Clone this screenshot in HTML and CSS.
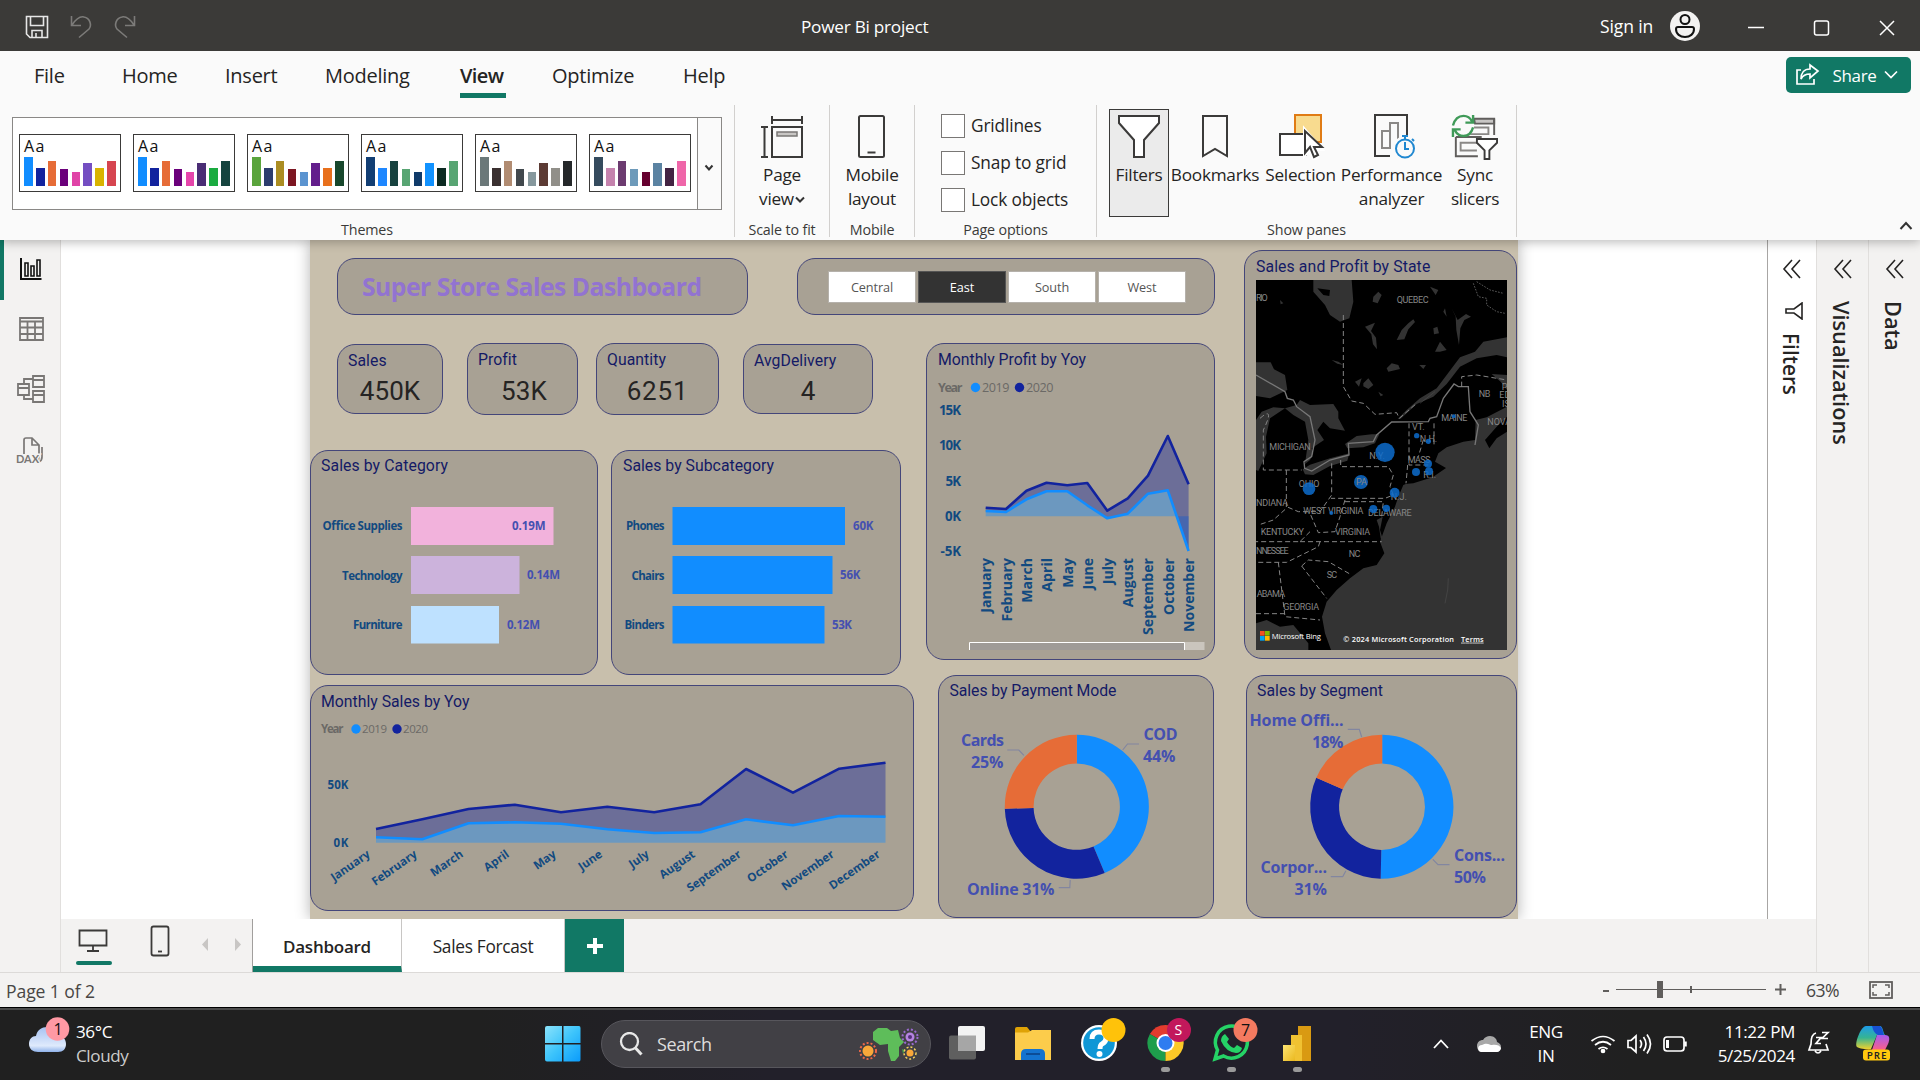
FILE: index.html
```html
<!DOCTYPE html>
<html lang="en">
<head>
<meta charset="utf-8">
<title>Power Bi project</title>
<link rel="stylesheet" href="styles.css">
</head>
<body>
<header class="titlebar">
  <svg class="quick" width="136" height="51" viewBox="0 0 136 51" fill="none">
    <g stroke="#e6e6e6" stroke-width="1.6"><path d="M26.5 16.5h21v21H30l-3.500-3.500z"/><path d="M30.500 17v8.500h13V17M32 37.500v-7h10v7M36 37v-4"/></g>
    <g stroke="#7c7b79" stroke-width="1.600"><path d="M71.500 16v9.500h9.500M72 25c4-6 8-9 12-8 6 1 8 8 5 12l-10 8.500"/><path d="M134.500 16v9.500H125M134 25c-4-6-8-9-12-8-6 1-8 8-5 12l10 8.500"/></g>
  </svg>
  <div class="doc-title">Power Bi project</div>
  <div class="sign-in">Sign in</div>
  <svg class="avatar" width="30" height="30" viewBox="0 0 30 30"><circle cx="15" cy="15" r="15" fill="#f3f2f1"/><g fill="none" stroke="#111" stroke-width="2"><circle cx="15" cy="8.500" r="4.500"/><path d="M8 16h14c1 0 2 1 2 2 0 5-4 8-9 8s-9-3-9-8c0-1 1-2 2-2z"/></g></svg>
  <svg class="winctl" width="150" height="18" viewBox="0 0 150 18" fill="none" stroke="#fff" stroke-width="1.500"><path d="M1 8.500h16"/><rect x="67.500" y="2" width="14" height="14" rx="2"/><path d="M133 2l14 14M147 2l-14 14"/></svg>
</header>

<nav class="menu">
  <a class="m-file">File</a><a class="m-home">Home</a><a class="m-insert">Insert</a><a class="m-model">Modeling</a><a class="m-view on">View</a><a class="m-opt">Optimize</a><a class="m-help">Help</a>
  <button class="share">
    <svg width="26" height="24" viewBox="0 0 26 24" fill="none" stroke="#fff" stroke-width="1.700"><path d="M6 7H2v14h17v-5"/><path d="M15 2l8 6-8 7v-4c-4 0-7 1-9 5 0-6 3-10 9-10z"/></svg>
    <span>Share</span>
    <svg width="16" height="10" viewBox="0 0 16 10" fill="none" stroke="#fff" stroke-width="1.700"><path d="M2 1.500l6 6 6-6"/></svg>
  </button>
</nav>

<section class="ribbon">
  <div class="group g-themes">
    <div class="gallery">
      <div class="thumbs">
        <div class="thumb"><b>Aa</b><div class="bars"><i style="background:#118dff"></i><i style="background:#12239e"></i><i style="background:#e66c37"></i><i style="background:#6b007b"></i><i style="background:#e044a7"></i><i style="background:#744ec2"></i><i style="background:#d9b300"></i><i style="background:#d64550"></i></div></div>
        <div class="thumb"><b>Aa</b><div class="bars"><i style="background:#118dff"></i><i style="background:#12239e"></i><i style="background:#e66c37"></i><i style="background:#6b007b"></i><i style="background:#e645ab"></i><i style="background:#4a2d75"></i><i style="background:#1aab40"></i><i style="background:#15443f"></i></div></div>
        <div class="thumb"><b>Aa</b><div class="bars"><i style="background:#5aa43c"></i><i style="background:#2c3c6e"></i><i style="background:#ab8d22"></i><i style="background:#7c1621"></i><i style="background:#5b94d0"></i><i style="background:#631e8c"></i><i style="background:#e8701c"></i><i style="background:#18472c"></i></div></div>
        <div class="thumb"><b>Aa</b><div class="bars"><i style="background:#123e73"></i><i style="background:#1e87ff"></i><i style="background:#17423f"></i><i style="background:#58a573"></i><i style="background:#103b6a"></i><i style="background:#1192ff"></i><i style="background:#0c2a22"></i><i style="background:#58a573"></i></div></div>
        <div class="thumb"><b>Aa</b><div class="bars"><i style="background:#6b7879"></i><i style="background:#3a3030"></i><i style="background:#b18c72"></i><i style="background:#41484d"></i><i style="background:#86989d"></i><i style="background:#5c3b34"></i><i style="background:#918f89"></i><i style="background:#25282a"></i></div></div>
        <div class="thumb"><b>Aa</b><div class="bars"><i style="background:#354b5e"></i><i style="background:#c583ae"></i><i style="background:#6c3b70"></i><i style="background:#6d9aba"></i><i style="background:#66002f"></i><i style="background:#5b83a2"></i><i style="background:#432342"></i><i style="background:#ef66a9"></i></div></div>
      </div>
      <div class="more"><svg width="10" height="8" viewBox="0 0 10 8"><path d="M1.500 1.500l3.500 4 3.500-4" fill="none" stroke="#333" stroke-width="2"/></svg></div>
    </div>
    <div class="glabel">Themes</div>
  </div>
  <div class="group g-scale">
    <div class="tool">
      <svg width="44" height="44" viewBox="0 0 44 44" fill="none" stroke="#3b3a39" stroke-width="2"><path d="M12 1v8M42 1v8M12 5h30M1 12h7M1 42h7M4.500 12v30"/><rect x="12" y="12" width="30" height="30"/><rect x="17" y="17" width="20" height="4" fill="#c8c6c4" stroke="#797775" stroke-width="1.500"/></svg>
      <span>Page<br>view<svg class="mini" width="10" height="8" viewBox="0 0 10 8"><path d="M1 1.500l4 4 4-4" fill="none" stroke="#333" stroke-width="2"/></svg></span>
    </div>
    <div class="glabel">Scale to fit</div>
  </div>
  <div class="group g-mobile">
    <div class="tool">
      <svg width="44" height="44" viewBox="0 0 44 44" fill="none" stroke="#3b3a39" stroke-width="2"><rect x="9" y="1" width="25" height="41" rx="1.500"/><path d="M17.500 37.500h8"/></svg>
      <span>Mobile<br>layout</span>
    </div>
    <div class="glabel">Mobile</div>
  </div>
  <div class="group g-options">
    <div class="checks"><label><i></i>Gridlines</label><label><i></i>Snap to grid</label><label><i></i>Lock objects</label></div>
    <div class="glabel">Page options</div>
  </div>
  <div class="group g-panes">
    <div class="tools">
      <div class="tool w-filters active">
        <svg width="44" height="44" viewBox="0 0 44 44" fill="#fff" stroke="#3b3a39" stroke-width="2"><path d="M2 1h40v7L27 25v17H17V25L2 8z"/></svg><span>Filters</span></div>
      <div class="tool w-book"><svg width="44" height="44" viewBox="0 0 44 44" fill="#fafafa" stroke="#3b3a39" stroke-width="2"><path d="M10 1h24v40l-12-7-12 7z"/></svg><span>Bookmarks</span></div>
      <div class="tool w-sel"><svg width="48" height="46" viewBox="0 0 48 46"><rect x="18" y="1" width="26" height="27" fill="#f8db8f" stroke="#e07b14" stroke-width="2"/><rect x="3" y="20" width="26" height="21" fill="#fff" stroke="#3b3a39" stroke-width="2"/><path d="M27 14l19 22h-9l4 8-5 2-4-9-5 6z" fill="#fff" stroke="#fff" stroke-width="2"/><path d="M28 17v22l5-6 4 10 4-2-4-8h8z" fill="#fff" stroke="#3b3a39" stroke-width="2"/></svg><span>Selection</span></div>
      <div class="tool w-perf"><svg width="46" height="46" viewBox="0 0 46 46" fill="none" stroke-width="2"><g stroke="#3b3a39"><path d="M21 42H6V1h32v21"/></g><path d="M22 34h-9V17h8v17M21 34V9h8v16" stroke="#8a8886"/><circle cx="36" cy="34" r="12" fill="#fafafa" stroke="none"/><g stroke="#1f87d0"><circle cx="36" cy="34.500" r="9"/><path d="M36 28v7h4M33 22h6M36 22v3M43 25l2 2"/></g></svg><span>Performance<br>analyzer</span></div>
      <div class="tool w-sync"><svg width="50" height="48" viewBox="0 0 50 48" fill="none" stroke-width="2"><g stroke="#605e5c"><path d="M24 5h21v5H25z" fill="#c8c6c4"/><path d="M45 5v17M5 24v20h23M5 24h27"/><path d="M24 14h15v7H20M27 30H10v8h17" stroke="#8a8886"/></g><path d="M27 26h21v4l-8 8v9h-5v-9l-8-8z" fill="#fff" stroke="#3b3a39"/><g stroke="#3f9a58" stroke-width="2.500"><path d="M2 12C4 5 8 2 13 2c4 0 7 2 9 6M23 1v8h-8M23 14c-2 7-6 9-10 9-4 0-7-2-9-6M2 24v-8h8"/></g></svg><span>Sync<br>slicers</span></div>
    </div>
    <div class="glabel">Show panes</div>
  </div>
  <div class="collapse"><svg width="14" height="10" viewBox="0 0 14 10"><path d="M1.500 8l5.500-6 5.500 6" fill="none" stroke="#333" stroke-width="2"/></svg></div>
</section>

<div class="body">
  <aside class="rail">
    <div class="rail-item on"><svg width="30" height="30" viewBox="0 0 30 30" fill="none" stroke="#111" stroke-width="2"><path d="M5 3v21h20.500" /><path d="M9 21V8h3v13zM15 21V11h3v10zM21 21V5h3v16z" stroke-width="1.600"/></svg></div>
    <div class="rail-item"><svg width="30" height="30" viewBox="0 0 30 30" fill="none" stroke="#797775" stroke-width="1.800"><path d="M4 4h23v22H4zM4 7.500h23M4 13.500h23M4 20h23M11.500 7v19M19 7v19"/></svg></div>
    <div class="rail-item"><svg width="32" height="32" viewBox="0 0 32 32" fill="none" stroke="#797775" stroke-width="1.800"><path d="M3 11h11v11H3zM3 15h11M18 3h11v11H18zM18 7h11M18 18h11v11H18zM18 22h11M9 11V6h9M9 22v4h9"/></svg></div>
    <div class="rail-item"><svg width="32" height="32" viewBox="0 0 32 32" fill="none" stroke="#797775" stroke-width="1.700"><path d="M9 20V6c0-1 1-2 2-2h6l7 7v11c0 3-1 5-2 6M17 4v7h7M27 13v10c0 2-1 4-3 5"/><text x="1" y="28.500" class="dax">DAX</text></svg></div>
  </aside>

  <div class="center">
    <div class="workspace">
      <div class="canvas">
        <main class="page">
          <div class="col-main">
            <div class="row-head">
              <div class="card banner">Super Store Sales Dashboard</div>
              <div class="card slicer"><span>Central</span><span class="on">East</span><span>South</span><span>West</span></div>
            </div>
            <div class="row-body">
              <div class="col-left">
                <div class="kpis">
                  <div class="card kpi k1"><h3>Sales</h3><p>450K</p></div>
                  <div class="card kpi tall k2"><h3>Profit</h3><p>53K</p></div>
                  <div class="card kpi tall k3"><h3>Quantity</h3><p>6251</p></div>
                  <div class="card kpi k4"><h3>AvgDelivery</h3><p>4</p></div>
                </div>
                <div class="row-cat">
                  <div class="card cat">
                    <svg width="286" height="223" viewBox="311 451 286 223">
                      <text class="din" x="321" y="471" textLength="127">Sales by Category</text>
                      <rect x="411" y="507" width="142.500" height="38" fill="#f2b2dc"/><rect x="411" y="556" width="108.500" height="38" fill="#ccb3dc"/><rect x="411" y="606" width="88" height="37.500" fill="#bee1ff"/>
                      <g class="lbl s12"><text x="322.500" y="530" textLength="80">Office Supplies</text><text x="342" y="580" textLength="60.500">Technology</text><text x="353" y="629" textLength="49.500">Furniture</text></g>
                      <g class="val s12"><text x="512" y="530" textLength="33.500">0.19M</text><text x="527" y="579" textLength="33">0.14M</text><text x="507" y="629" textLength="33">0.12M</text></g>
                    </svg>
                  </div>
                  <div class="card sub">
                    <svg width="288" height="223" viewBox="612 451 288 223">
                      <text class="din" x="623" y="471" textLength="151">Sales by Subcategory</text>
                      <g fill="#118dff"><rect x="672.500" y="507" width="172.500" height="38"/><rect x="672.500" y="556" width="160" height="38"/><rect x="672.500" y="606" width="152" height="37.500"/></g>
                      <g class="lbl s12"><text x="626" y="530" textLength="38.500">Phones</text><text x="631.500" y="580" textLength="33">Chairs</text><text x="624.500" y="629" textLength="40">Binders</text></g>
                      <g class="val s12"><text x="853" y="530" textLength="20.500">60K</text><text x="840" y="579" textLength="20.500">56K</text><text x="832" y="629" textLength="20">53K</text></g>
                    </svg>
                  </div>
                </div>
                <div class="card msales">
                  <svg width="602" height="224" viewBox="311 686 602 224">
                    <text class="din" x="321" y="707" textLength="148.500">Monthly Sales by Yoy</text>
                    <g class="legend s12"><text x="321" y="733" class="yr" textLength="22.500">Year</text><circle cx="356" cy="729" r="4.700" fill="#118dff"/><text x="362" y="733" textLength="25">2019</text><circle cx="397" cy="729" r="4.700" fill="#12239e"/><text x="403" y="733" textLength="25">2020</text></g>
                    <path fill="#12239e" fill-opacity=".4" d="M376 829L422.300 819.300 468.500 809 514.800 804.700 561 812.300 607.300 806.700 654.200 812.300 700.500 804.300 746.100 769 793 792.700 839.200 768.700 885.500 762.700V816.700L839.200 816 793 825.300 746.100 819.300 700.500 832.300 654.200 833 607.300 829.300 561 823.700 514.800 822.300 468.500 823.300 422.300 839.300 376 837.300z"/>
                    <path fill="#118dff" fill-opacity=".4" d="M376 837.300L422.300 839.300 468.500 823.300 514.800 822.300 561 823.700 607.300 829.300 654.200 833 700.500 832.300 746.100 819.300 793 825.300 839.200 816 885.500 816.700V842.700H376z"/>
                    <path class="line" stroke="#118dff" d="M376 837.300L422.300 839.300 468.500 823.300 514.800 822.300 561 823.700 607.300 829.300 654.200 833 700.500 832.300 746.100 819.300 793 825.300 839.200 816 885.500 816.700"/>
                    <path class="line" stroke="#12239e" d="M376 829L422.300 819.300 468.500 809 514.800 804.700 561 812.300 607.300 806.700 654.200 812.300 700.500 804.300 746.100 769 793 792.700 839.200 768.700 885.500 762.700"/>
                    <g class="lbl s12"><text x="327.500" y="789" textLength="21">50K</text><text x="333.500" y="847" textLength="15">0K</text></g>
                    <g class="lbl months"><text transform="translate(371 856) rotate(-35)">January</text><text transform="translate(418 856) rotate(-35)">February</text><text transform="translate(464 856) rotate(-35)">March</text><text transform="translate(510 856) rotate(-35)">April</text><text transform="translate(557 856) rotate(-35)">May</text><text transform="translate(603 856) rotate(-35)">June</text><text transform="translate(650 856) rotate(-35)">July</text><text transform="translate(696 856) rotate(-35)">August</text><text transform="translate(742 856) rotate(-35)">September</text><text transform="translate(789 856) rotate(-35)">October</text><text transform="translate(835 856) rotate(-35)">November</text><text transform="translate(881 856) rotate(-35)">December</text></g>
                  </svg>
                </div>
              </div>
              <div class="col-mid">
                <div class="card mprofit">
                  <svg width="287" height="315" viewBox="927 344 287 315">
                    <text class="din" x="938" y="365" textLength="148">Monthly Profit by Yoy</text>
                    <g class="legend s13"><text x="938" y="392" class="yr" textLength="24.500">Year</text><circle cx="975.500" cy="387.500" r="4.700" fill="#118dff"/><text x="982" y="392" textLength="27.500">2019</text><circle cx="1019.500" cy="387.500" r="4.700" fill="#12239e"/><text x="1026" y="392" textLength="27.500">2020</text></g>
                    <path fill="#12239e" fill-opacity=".4" d="M985.700 507.700L1006 509 1026.500 490.700 1046.500 482.700 1067.300 485.300 1087.300 483 1107.300 510.700 1127.800 498.300 1148 475.700 1167.800 436 1188.600 484.300V551L1167.800 490.300 1148 493.700 1127.800 513.700 1107.300 518.300 1087.300 505.300 1067.300 491.300 1046.500 491.300 1026.500 499.300 1006 512 985.700 511z"/>
                    <path fill="#118dff" fill-opacity=".4" d="M985.700 511L1006 512 1026.500 499.300 1046.500 491.300 1067.300 491.300 1087.300 505.300 1107.300 518.300 1127.800 513.700 1148 493.700 1167.800 490.300 1176.700 516.300 985.700 516.300z"/>
                    <path fill="#1159d0" fill-opacity=".4" d="M1176.700 516.300H1188.600V551z"/>
                    <path class="line" stroke="#118dff" d="M985.700 511L1006 512 1026.500 499.300 1046.500 491.300 1067.300 491.300 1087.300 505.300 1107.300 518.300 1127.800 513.700 1148 493.700 1167.800 490.300 1188.600 551"/>
                    <path class="line" stroke="#12239e" d="M985.700 507.700L1006 509 1026.500 490.700 1046.500 482.700 1067.300 485.300 1087.300 483 1107.300 510.700 1127.800 498.300 1148 475.700 1167.800 436 1188.600 484.300"/>
                    <g class="lbl s14"><text x="939" y="415" textLength="22">15K</text><text x="939" y="450" textLength="22">10K</text><text x="945.500" y="486" textLength="15.500">5K</text><text x="945" y="521" textLength="16">0K</text><text x="940.500" y="556" textLength="20.500">-5K</text></g>
                    <g class="lbl vmonths"><text transform="translate(991 558) rotate(-90)">January</text><text transform="translate(1011.500 558) rotate(-90)">February</text><text transform="translate(1032 558) rotate(-90)">March</text><text transform="translate(1052 558) rotate(-90)">April</text><text transform="translate(1072.500 558) rotate(-90)">May</text><text transform="translate(1093 558) rotate(-90)">June</text><text transform="translate(1113 558) rotate(-90)">July</text><text transform="translate(1133 558) rotate(-90)">August</text><text transform="translate(1153 558) rotate(-90)">September</text><text transform="translate(1174 558) rotate(-90)">October</text><text transform="translate(1194 558) rotate(-90)">November</text></g>
                    <rect x="969" y="642" width="235.500" height="8" fill="#cac5bd"/><rect x="969" y="642" width="215.500" height="8" fill="#9f9b97"/><path d="M969.500 650v-7.500h215v7.500" fill="none" stroke="#fff"/>
                  </svg>
                </div>
                <div class="card pay">
                  <svg width="274" height="241" viewBox="939.500 676 274 241">
                    <text class="din" x="950" y="696" textLength="167">Sales by Payment Mode</text>
                    <g transform="translate(1077.300 806.700)"><path fill="#118dff" d="M0-72A72 72 0 0 1 27.900 66.400L16.700 39.800A43.200 43.200 0 0 0 0-43.200z"/><path fill="#12239e" d="M27.900 66.400A72 72 0 0 1-72 2L-43.200 1.200A43.200 43.200 0 0 0 16.700 39.800z"/><path fill="#e66c37" d="M-72 2A72 72 0 0 1 0-72V-43.200A43.200 43.200 0 0 0-43.200 1.200z"/></g>
                    <path class="lead" d="M1007.800 750H1019.300L1024.400 755.300M1123.200 750L1128 744H1139.500M1059.200 887.700H1070.300L1070.700 880"/>
                    <g class="val s16"><text x="961.500" y="746" textLength="43">Cards</text><text x="971.500" y="768" textLength="32.500">25%</text><text x="1144" y="740" textLength="34">COD</text><text x="1143.500" y="762" textLength="32.500">44%</text><text x="967.500" y="895" textLength="87.500">Online 31%</text></g>
                  </svg>
                </div>
              </div>
            </div>
          </div>
          <div class="col-side">
            <div class="card state">
              <h2>Sales and Profit by State</h2>
              <svg class="map" width="251" height="370" viewBox="78 120 753 1110">
                <rect x="78" y="120" width="753" height="1110" fill="#000"/>
                <g fill="#333">
                  <path d="M735 600L700 605 650 622 625 640 615 665 648 684 610 710 570 715 520 735 505 770 495 800 470 850 450 905 463 940 440 975 400 985 360 1015 320 1050 290 1085 276 1130 285 1180 303 1230H831V500L770 532 737 540z"/>
                  <path d="M831 292L760 305 735 335 690 352 650 405 620 445 570 475 530 510 503 537 512 536 560 492 610 470 650 432 690 380 740 355 800 345 831 352z"/>
                  <path d="M785 402L831 405V450L812 425z"/>
                  <path d="M250 120L250 155 285 195 300 225 330 245 358 235 370 185 365 120z"/>
                  <path d="M78 367H122L132 388 165 405 172 450 120 475 78 468z"/>
                  <path d="M78 540L95 515 130 502 165 505 120 535 108 590 110 640 85 693 78 690z"/>
                  <path d="M165 505L200 495 210 480 240 495 310 492 325 515 325 535 345 572 300 565 280 545 262 570 282 600 245 625 250 640 240 660 225 672 235 600 225 545 190 525z"/>
                  <path d="M218 688L240 674 300 655 358 640 352 662 300 678 250 705 225 703z"/><path d="M345 612L380 588 425 583 448 583 435 610 400 622 352 625z"/>
                  <path d="M78 1150L110 1140 150 1160 190 1155 215 1185 235 1210 235 1230H78z"/>
                  <path d="M430 170l15-15 10 10-12 25-15-5zM500 300l15-30 20-20 15-12 5 8-20 22-12 30zM405 260l30-12-12 25 15 20 3 35-12-15-5-30zM610 265l12-5 5 20-15 3zM665 205l12 25 2 40 8 45 4-50 12-25 20-10-15-8-25 18zM615 335l15-30 20 25-20 5zM470 385l15-15 20 5 5 12-35 8zM400 430l15-15 15 20-15 12-15-8zM568 375h20l-8 12zM305 360l20 5 15 10-18-4zM600 140l25 10-8 15zM640 215l5-10 5 25zM150 180l10 10-8 3zM445 455l15 10-8 4zM375 425l20-10-8 25z"/>
                  <path d="M440 840l18-10-8 40 12 40-10-15-5-35z"/>
                </g>
                <path d="M765 600L800 560 831 530V575L800 595 778 625zM262 145L300 150 298 168 280 165zM515 733L560 715 610 702 600 714 550 730z" fill="#000"/>
                <g fill="none" stroke="#858585" stroke-width="3">
                  <path d="M78 405L165 455 172 475 190 480 200 500 240 530 255 600 245 650 222 665 224 685 245 693 300 660 357 645 355 610 430 605 440 585 485 546 595 545 600 535 620 530 640 475 672 432 685 440 715 440 720 515 745 555 735 615" stroke="#777" stroke-width="4"/>
                  <g stroke-dasharray="15 9"><path d="M340 225V440L365 483 400 490 435 523 500 518 508 535 560 490M695 440V410L740 405 831 420M90 535C130 500 115 540 100 570V690H215M169 690V805L130 840 85 855M305 670V765L270 815H205L170 800M332 660V680H475L490 705 480 740 490 765 465 775H303M537 550V675H600M533 675L528 730M612 550V620M580 600L565 650M345 780L330 830 315 875 265 878 240 820M345 785H460L455 830M240 875L210 905H78M210 905H455M270 905L265 920 170 967H78M215 978L235 960 295 965 365 1005M215 978L290 1075M145 967L165 1130 270 1140M78 1121H165"/></g>
                  <path d="M570 490L615 455M655 1015L653 1050 645 1090" stroke-width="1.500" stroke="#555"/>
                  <path d="M730 130l15 40 25 5 0 20 30 20 25 5M740 125l40 25 40 10" stroke-width="2" stroke-dasharray="5 4"/>
                </g>
                <g class="place"><text x="78" y="182" textLength="35">RIO</text><text x="500" y="188" textLength="96">QUEBEC</text><text x="746" y="470" textLength="35">NB</text><text x="815" y="450">P</text><text x="808" y="475">ED</text><text x="816" y="501">IS</text><text x="634" y="544" textLength="78">MAINE</text><text x="772" y="555">NOVA</text><text x="546" y="571">VT.</text><text x="569" y="606">N.H.</text><text x="533" y="668" textLength="68">MASS</text><text x="580" y="715">R.I.</text><text x="418" y="657">N.Y.</text><text x="118" y="629" textLength="124">MICHIGAN</text><text x="206" y="742" textLength="62">OHIO</text><text x="482" y="781">N.J.</text><text x="78" y="798" textLength="96">NDIANA</text><text x="220" y="821" textLength="180">WEST VIRGINIA</text><text x="414" y="827" textLength="131">DELAWARE</text><text x="92" y="884" textLength="130">KENTUCKY</text><text x="315" y="884" textLength="105">VIRGINIA</text><text x="78" y="941" textLength="98">NNESSEE</text><text x="356" y="951" textLength="35">NC</text><text x="290" y="1013" textLength="31">SC</text><text x="80" y="1070" textLength="85">ABAMA</text><text x="160" y="1109" textLength="107">GEORGIA</text></g>
                <g fill="#0d6ccd" fill-opacity=".85"><circle cx="465" cy="637" r="29"/><circle cx="393" cy="726" r="21"/><circle cx="237" cy="746" r="19"/><circle cx="494" cy="758" r="15"/><circle cx="430" cy="807" r="12"/><circle cx="469" cy="805" r="11"/><circle cx="558" cy="696" r="12"/><circle cx="594" cy="671" r="12"/><circle cx="597" cy="694" r="12"/><circle cx="560" cy="587" r="8"/><circle cx="595" cy="604" r="8"/><circle cx="671" cy="529" r="6"/><circle cx="304" cy="819" r="6"/></g>
                <text class="place" x="378" y="735">PA</text>
                <path fill="#f25022" d="M90 1173h14v14H90z"/><path fill="#7fba00" d="M105 1173h14v14h-14z"/><path fill="#00a4ef" d="M90 1188h14v14H90z"/><path fill="#ffb900" d="M105 1188h14v14h-14z"/>
                <g class="bing"><text x="125" y="1197" textLength="148">Microsoft Bing</text><text x="340" y="1205" class="bold" textLength="332">© 2024 Microsoft Corporation</text><text x="693" y="1205" class="bold terms" textLength="68">Terms</text></g>
              </svg>
            </div>
            <div class="card seg">
              <svg width="269" height="241" viewBox="1247 676 269 241">
                <text class="din" x="1257" y="696" textLength="126">Sales by Segment</text>
                <g transform="translate(1382.200 806.700)"><path fill="#118dff" d="M0-72A72 72 0 1 1-1.500 72L-.9 43.200A43.200 43.200 0 1 0 0-43.200z"/><path fill="#12239e" d="M-1.500 72A72 72 0 0 1-65.900-29L-39.500-17.400A43.200 43.200 0 0 0-.9 43.200z"/><path fill="#e66c37" d="M-65.900-29A72 72 0 0 1 0-72V-43.200A43.200 43.200 0 0 0-39.500-17.400z"/></g>
                <path class="lead" d="M1347.800 729.300H1359.300L1361.700 737M1330.800 876.700H1342.700L1345.900 870.700M1432.800 859.300L1438 864.700H1449.500"/>
                <g class="val s16"><text x="1249.500" y="726" textLength="94">Home Offi...</text><text x="1312" y="748" textLength="31.500">18%</text><text x="1260.500" y="873" textLength="66.500">Corpor...</text><text x="1294.500" y="895" textLength="32.500">31%</text><text x="1454" y="861" textLength="51">Cons...</text><text x="1454" y="883" textLength="32">50%</text></g>
              </svg>
            </div>
          </div>
        </main>
      </div>
      <aside class="pane filters">
        <svg width="20" height="20" viewBox="0 0 20 20" class="dbl"><path d="M10 1L2 10l8 9M18 1l-8 9 8 9"/></svg>
        <svg class="fun" width="18" height="18" viewBox="0 0 18 18"><path d="M17 1v16L9 11H1V7h8z"/></svg>
        <span>Filters</span>
      </aside>
    </div>
    <div class="tabs">
      <div class="views">
        <svg width="191" height="53" viewBox="61 919 191 53" fill="none" stroke="#3b3a39" stroke-width="1.800"><path d="M79.500 930.500h27v15h-27zM93 946v5M87 951h12"/><rect x="151.500" y="926.500" width="17" height="29" rx="2"/><path d="M158 951.500h4"/><rect x="76" y="961" width="36" height="4" rx="2" fill="#117865" stroke="none"/><path d="M208 938v13l-6-6.500zM235 938v13l6-6.500z" fill="#c8c6c4" stroke="none"/></svg>
      </div>
      <div class="tab on">Dashboard</div><div class="tab second">Sales Forcast</div>
      <div class="add"><svg width="16" height="16" viewBox="0 0 16 16"><path d="M8 0v16M0 8h16" stroke="#fff" stroke-width="4"/></svg></div>
    </div>
  </div>

  <aside class="pane vis"><svg width="20" height="20" viewBox="0 0 20 20" class="dbl"><path d="M10 1L2 10l8 9M18 1l-8 9 8 9"/></svg><span>Visualizations</span></aside>
  <aside class="pane data"><svg width="20" height="20" viewBox="0 0 20 20" class="dbl"><path d="M10 1L2 10l8 9M18 1l-8 9 8 9"/></svg><span>Data</span></aside>
</div>

<footer class="status">
  <span class="pageno">Page 1 of 2</span>
  <svg width="190" height="20" viewBox="1600 981 190 20" stroke="#605e5c" fill="none"><path d="M1603 992h6M1775 990.500h11M1780.500 985v11" stroke-width="2"/><path d="M1616 990.500h150"/><path d="M1691 987v7" stroke-width="2"/><path d="M1660 982v17" stroke-width="6"/></svg>
  <span class="pct">63%</span>
  <svg width="24" height="18" viewBox="0 0 24 18" stroke="#605e5c" fill="none"><rect x="1" y="1" width="22" height="16" stroke-width="1.800"/><path d="M4 7V4h4M16 4h4v3M20 11v3h-4M8 14H4v-3" stroke-width="1.500"/></svg>
</footer>

<footer class="taskbar">
  <div class="weather">
    <svg width="42" height="40" viewBox="28 1016 42 40"><defs><linearGradient id="cl" x1="0" y1="0" x2="0" y2="1"><stop offset="0" stop-color="#a6c2f2"/><stop offset=".75" stop-color="#dfeafc"/><stop offset="1" stop-color="#8fb2ea"/></linearGradient></defs><path d="M38 1052c-5 0-9-3-9-8s3-8 7-8c1-6 6-9 11-9 6 0 11 4 11 9 5 0 8 3 8 8s-3 8-8 8z" fill="url(#cl)"/><circle cx="57.500" cy="1029" r="11.800" fill="#ff99a4"/><text x="53.500" y="1035" class="badge">1</text></svg>
    <div><p>36°C</p><p class="dim">Cloudy</p></div>
  </div>
  <svg class="win" width="36" height="36" viewBox="0 0 36 36"><defs><linearGradient id="wg" x1="0" y1="0" x2="1" y2="1"><stop offset="0" stop-color="#8be3fb"/><stop offset=".5" stop-color="#3dc4fb"/><stop offset="1" stop-color="#0a9bfb"/></linearGradient></defs><path fill="url(#wg)" d="M2 0h15v17H0V2q0-2 2-2zM18.500 0H34q1.500 0 1.500 2v15h-17zM0 18.500h17v17H2q-2 0-2-2zM18.500 18.500h17v15q0 2-1.500 2h-15.500z"/></svg>
  <div class="search">
    <svg width="24" height="24" viewBox="0 0 24 24" fill="none" stroke="#e8e8e8" stroke-width="2.300"><circle cx="10.500" cy="9.500" r="8.500"/><path d="M16.500 16l6 6.500" stroke-width="3"/></svg>
    <span>Search</span>
    <svg class="art" width="64" height="36" viewBox="856 1026 64 36"><path d="M873 1032l5-4h9l4 3 7-1 2 8 4 4-5 5v9l-4 5h-4l-3-10v-7l-8 1-7-5z" fill="#5ebd5a"/><path d="M902 1049l3 1-2 4z" fill="#3b9b4a"/><g fill="#f9a83a"><circle cx="868" cy="1051" r="5.500"/><circle cx="910" cy="1053" r="3.500"/></g><circle cx="910" cy="1037" r="4.500" fill="#b583e0"/><circle cx="910" cy="1037" r="2" fill="#533078"/><g fill="none" stroke-dasharray="2 2"><circle cx="868" cy="1051" r="8" stroke="#ee6848" stroke-width="2"/><circle cx="910" cy="1037" r="7.500" stroke="#9a6ad0" stroke-width="2"/><circle cx="910" cy="1053" r="6" stroke="#f5d25d" stroke-width="1.500"/></g></svg>
  </div>
  <svg class="apps" width="370" height="66" viewBox="945 1012 370 66">
    <defs><linearGradient id="pb" x1="0" y1="0" x2="1" y2="1"><stop offset="0" stop-color="#fde472"/><stop offset="1" stop-color="#eab81e"/></linearGradient></defs>
    <rect x="949" y="1036.500" width="27" height="24" rx="2" fill="#5f5f5f"/><rect x="958" y="1027" width="27" height="25" rx="2" fill="#f3f3f3"/><path d="M958 1036.500h18V1052h-18z" fill="#a6a6a6"/>
    <path d="M1015 1030q0-2 2-2h10l4 5v8h-16z" fill="#dfa206"/><path d="M1015 1033.500h13l4-2.500h19v30h-36z" fill="#fccc4b"/><path d="M1021 1061v-6q0-5 5-5h14q5 0 5 5v6z" fill="#1473cf"/><path d="M1026 1055h14" stroke="#0c4c96" stroke-width="2"/>
    <circle cx="1099" cy="1044" r="18" fill="#fff"/><circle cx="1099" cy="1044" r="15.800" fill="#0f97d6"/><path d="M1092 1040q0-7 7-7t7 6q0 4-4 6-2 1-2 5" fill="none" stroke="#fff" stroke-width="5"/><circle cx="1099.500" cy="1055" r="3" fill="#fff"/><circle cx="1113.500" cy="1031" r="12" fill="#ffc20a"/>
    <g transform="translate(1165.500 1044)"><path d="M0 0L-15.600-9A18 18 0 0 1 15.600-9z" fill="#e33b2e"/><path d="M0 0L-15.600-9A18 18 0 0 0 0 18z" fill="#1e9e4c"/><path d="M0 0L15.600-9A18 18 0 0 1 0 18z" fill="#fcc927"/><circle r="9" fill="#fff"/><circle r="7" fill="#2f7cf0"/></g><circle cx="1179" cy="1031" r="12" fill="#c2185b"/><text x="1174.500" y="1036" class="badge light">S</text>
    <path d="M1215 1060l2.500-9a16 16 0 1 1 6 6z" fill="none" stroke="#25d366" stroke-width="3.500"/><path d="M1225 1035l4 5-2 3q3 5 7 6l3-3 5 3q-1 5-6 5-10-1-15-12 0-5 4-7z" fill="#25d366"/><circle cx="1245.500" cy="1031" r="12" fill="#f47a60"/><text x="1241" y="1037" class="badge">7</text>
    <path d="M1298 1027h13v35h-13z" fill="#d99a12"/><path d="M1291 1036h11v26h-11z" fill="#f0c232"/><path d="M1283 1046h12v16h-12z" fill="url(#pb)"/>
    <g fill="#9a9a9a"><rect x="1161" y="1068" width="9" height="5" rx="2.500"/><rect x="1227" y="1068" width="9" height="5" rx="2.500"/><rect x="1293" y="1068" width="9" height="5" rx="2.500"/></g>
  </svg>
  <svg class="tray1" width="74" height="24" viewBox="1430 1032 74 24"><path d="M1434 1048l7-7.500 7 7.500" fill="none" stroke="#fff" stroke-width="1.800"/><path d="M1482 1052c-3 0-5-3-5-6 0-4 3-6 6-6 2-3 4-4 7-4 4 0 7 3 7 6 3 1 4 3 4 5s-2 5-5 5z" fill="#a8a8a8"/><path d="M1481 1052c-4-1-4-7 1-7 5-3 8 0 10 0 3-1 8 0 9 3 0 2-2 4-4 4z" fill="#fff"/></svg>
  <div class="lang"><p>ENG</p><p>IN</p></div>
  <svg class="tray2" width="100" height="24" viewBox="1590 1032 100 24" fill="none" stroke="#fff" stroke-width="1.700"><path d="M1591.500 1041q11.500-9 23 0M1595 1045q8-6.500 16 0M1598.500 1049q4.500-3.500 9 0"/><circle cx="1603" cy="1051" r="1.500" fill="#fff"/><path d="M1628 1040.500h3l5-4.500v16l-5-4.500h-3zM1640 1040q3 4 0 8M1643.500 1037q5 7 0 14M1647 1034.500q7 9.500 0 19"/><rect x="1664" y="1037" width="20" height="14" rx="3"/><path d="M1685.500 1041.500v5" stroke-width="2.500"/><path d="M1667.500 1040v8" stroke-width="3"/></svg>
  <div class="clock"><p>11:22 PM</p><p>5/25/2024</p></div>
  <svg class="tray3" width="84" height="40" viewBox="1806 1026 84 40"><defs><linearGradient id="c1" x1="0" y1="0" x2="0" y2="1"><stop offset="0" stop-color="#1e9be8"/><stop offset=".5" stop-color="#35b493"/><stop offset="1" stop-color="#f3d22b"/></linearGradient><linearGradient id="c2" x1="0" y1="0" x2="0" y2="1"><stop offset="0" stop-color="#a45cf0"/><stop offset="1" stop-color="#fb5f87"/></linearGradient></defs>
    <path d="M1816 1035c-5 1-5 7-5 11l-2 6h19l-2-6M1815 1053q3 4 6 0" fill="none" stroke="#fff" stroke-width="1.700"/><path d="M1816 1039.500h5l-5 6h5M1822 1034.500h6l-6 6h6" fill="none" stroke="#fff" stroke-width="1.700"/>
    <path d="M1866 1028h14c3 0 3 7 5 9h-8l-6 14c0 1-11 0-14-2-3-3 4-21 9-21z" fill="url(#c1)"/><path d="M1872 1028h8q2 1 4 9h-6q-4-1-6-9z" fill="#1751d2"/><path d="M1877 1037h8c5 0 5 4 3 9l-3 6h-13z" fill="url(#c2)"/><rect x="1863" y="1051.500" width="27" height="11" rx="3" fill="#ffc80e"/><text x="1867" y="1060.500" class="pre" textLength="19">PRE</text></svg>
</footer>
</body>
</html>
```
FILE: styles.css
```css
* { box-sizing: border-box; }
body { margin: 0; width: 1920px; height: 1080px; overflow: hidden; display: flex; flex-direction: column; font-family: "Open Sans", "Noto Sans", sans-serif; color: #252423; background: #fafafa; }
p, h2, h3 { margin: 0; }
svg { display: block; flex: none; }

/* title bar */
.titlebar { height: 51px; flex: none; background: #3b3a38; color: #fff; display: flex; align-items: center; font-size: 17.200px; letter-spacing: -.25px; }
.quick { width: 136px; }
.doc-title { width: 1462px; padding-left: 665px; padding-top: 1px; }
.sign-in { width: 72px; padding-left: 2px; padding-top: 1px; white-space: nowrap; font-size: 17.500px; letter-spacing: -.1px; }
.avatar { margin-right: 47px; }
.winctl { margin-top: 4px; }

/* menu */
.menu { height: 52px; flex: none; display: flex; align-items: flex-start; font-size: 20px; letter-spacing: -.25px; }
.menu a { padding-top: 10px; height: 47px; white-space: nowrap; line-height: 29px; }
.m-file { margin-left: 34px; width: 88px; }
.m-home { width: 103px; }
.m-insert { width: 100px; }
.m-model { width: 135px; }
.m-view { width: 46px; margin-right: 46px; }
.menu .on { font-weight: 600; border-bottom: 5px solid #117865; letter-spacing: -.6px; }
.m-opt { width: 131px; }
.share { margin: 6px 9px 0 auto; width: 125px; height: 36px; border: 0; border-radius: 5px; background: #117865; color: #fff; font: 400 17px "Open Sans", sans-serif; letter-spacing: -.3px; display: flex; align-items: center; padding: 0 0 0 9px; }
.share span { width: 62px; text-align: center; padding-left: 5px; }

/* ribbon */
.ribbon { height: 137px; flex: none; display: flex; position: relative; z-index: 2; background: #fafafa; box-shadow: 0 2px 10px rgba(0,0,0,.28); clip-path: inset(0 0 -20px 0); }
.group { height: 132px; margin-top: 2px; border-right: 1px solid #d2d0ce; display: flex; flex-direction: column; }
.glabel { margin-top: auto; height: 18px; line-height: 18px; margin-bottom: -2px; text-align: center; font-size: 14.300px; letter-spacing: -.15px; color: #3b3a39; white-space: nowrap; }
.g-themes { width: 735px; }
.g-scale { width: 95px; }
.g-mobile { width: 85px; }
.g-options { width: 182px; }
.g-panes { width: 420px; }
.gallery { margin: 12px 0 0 12px; width: 710px; height: 93px; border: 1px solid #8a8886; background: #fff; display: flex; }
.thumbs { width: 685px; border-right: 1px solid #8a8886; display: flex; gap: 12px; padding: 16px 0 0 6px; }
.thumb { width: 102px; height: 58px; border: 1.500px solid #3b3a39; padding: 3px 4px 0; }
.thumb b { display: block; font-weight: 400; font-size: 16px; line-height: 16px; height: 19px; letter-spacing: 1.500px; color: #111; }
.bars { height: 29px; display: flex; align-items: flex-end; gap: 3.200px; }
.bars i { width: 8.800px; height: 18px; }
.bars i:nth-child(1) { height: 29px; }
.bars i:nth-child(3), .bars i:nth-child(8) { height: 25px; }
.bars i:nth-child(4) { height: 17px; }
.bars i:nth-child(5) { height: 14px; }
.bars i:nth-child(6) { height: 23px; }
.more { flex: 1; display: flex; align-items: center; justify-content: center; padding-top: 9px; padding-right: 2px; background: #fafafa; }
.tool { display: flex; flex-direction: column; align-items: center; text-align: center; font-size: 17.200px; line-height: 24px; letter-spacing: -.25px; padding-top: 9px; }
.tool svg { height: 46px; }
.tool span { padding-top: 3px; white-space: nowrap; }
.tool .mini { display: inline-block; height: 8px; vertical-align: 1px; margin-left: 1px; }
.checks { padding: 8px 0 0 26px; display: flex; flex-direction: column; gap: 12px; font-size: 17.300px; letter-spacing: -.15px; }
.checks label { height: 25px; display: flex; align-items: center; gap: 6px; line-height: 25px; white-space: nowrap; }
.checks i { width: 24px; height: 24px; border: 1px solid #797775; background: #fff; }
.tools { display: flex; padding: 4px 0 0 12px; }
.tools .tool { padding-top: 5px; height: 108px; }
.w-filters { width: 60px; }
.active { background: #ebebeb; outline: 1px solid #3b3a39; outline-offset: -1px; }
.w-book { width: 92px; }
.w-sel { width: 79px; }
.w-perf { width: 103px; }
.w-sync { width: 64px; }
.collapse { flex: 1; display: flex; justify-content: flex-end; align-items: flex-end; padding: 0 7px 9px 0; }

/* work area */
.body { height: 732px; flex: none; display: flex; background: #f3f2f1; }
.rail { width: 61px; border-right: 1px solid #e1dfdd; display: flex; flex-direction: column; }
.rail-item { height: 60px; display: flex; align-items: center; justify-content: center; border-left: 4px solid transparent; padding-right: 2px; }
.rail-item:nth-child(2) { margin-bottom: -1px; padding-bottom: 3px; }
.rail-item:nth-child(3) { margin-bottom: 1px; }
.rail-item.on { border-color: #117865; }
.dax { font: bold 11px Lato, sans-serif; fill: #797775; stroke: #f3f2f1; stroke-width: 3px; paint-order: stroke; }
.center { width: 1755px; display: flex; flex-direction: column; }
.workspace { height: 679px; display: flex; background: #fff; }
.canvas { width: 1706px; padding-left: 249px; overflow: hidden; }
.page { width: 1208px; height: 679px; background: #c8bfac; box-shadow: 0 0 14px rgba(0,0,0,.3); display: flex; }
.col-main { width: 905px; padding-top: 18px; }
.col-side { padding: 10px 0 0 29px; }
.card { background: #a8a194; border: 1px solid #44467a; border-radius: 18px; overflow: hidden; flex: none; }
.row-head { display: flex; justify-content: space-between; padding-left: 27px; height: 85px; }
.banner { width: 411px; height: 57px; padding-left: 24px; line-height: 56px; font-weight: 700; font-size: 24.700px; color: #9273d1; letter-spacing: -.5px; white-space: nowrap; }
.slicer { width: 418px; height: 57px; display: flex; gap: 2px; padding: 12px 0 0 30px; }
.slicer span { width: 88px; height: 32px; border: 1px solid #b5b1ab; background: #fff; color: #555; text-align: center; font-size: 12.700px; letter-spacing: -.1px; line-height: 31px; }
.slicer .on { background: #333; color: #fff; border-color: #555; }
.row-body { display: flex; justify-content: space-between; }
.col-left { width: 604px; }
.kpis { display: flex; align-items: center; height: 72px; margin-left: 27px; }
.kpi { height: 70px; text-align: center; }
.tall { height: 72px; }
.kpi h3, .state h2 { font: 400 15.800px Roboto, sans-serif; color: #141a66; text-align: left; padding-left: 10px; line-height: 20px; padding-top: 6px; letter-spacing: .05px; white-space: nowrap; }
.kpi p { font: 400 26px/29px Roboto, sans-serif; color: #252423; padding-top: 6px; letter-spacing: .1px; }
.tall p { padding-top: 7px; }
.k1 { width: 106px; margin-right: 24px; }
.k2 { width: 111px; margin-right: 18px; }
.k2 p { padding-left: 3px; }
.k3 { width: 123px; margin-right: 24px; }
.k3 p { letter-spacing: .8px; }
.k4 { width: 130px; }
.row-cat { display: flex; gap: 13px; margin-top: 35px; }
.cat { width: 288px; height: 225px; }
.sub { width: 290px; height: 225px; }
.msales { margin-top: 10px; width: 604px; height: 226px; }
.mprofit { width: 289px; height: 317px; }
.pay { margin: 15px 0 0 12px; width: 276px; height: 243px; }
.state { width: 273px; height: 409px; }
.state h2 { padding-left: 11px; padding-top: 6px; height: 29px; letter-spacing: .1px; }
.map { margin-left: 11px; }
.seg { margin: 16px 0 0 2px; width: 271px; height: 243px; }

/* chart text */
.din { font: 400 15.800px Roboto, sans-serif; fill: #141a66; }
.lbl { font-weight: 700; fill: #124a80; }
.val { font-weight: 700; fill: #4450b0; }
.legend { fill: #6b6966; }
.yr { font-weight: 700; }
.s12 { font-size: 11.500px; }
.s13 { font-size: 12.600px; }
.s14 { font-size: 13.300px; }
.s16 { font-size: 16px; }
.months { font-size: 11.600px; text-anchor: end; }
.vmonths { font-size: 14.100px; text-anchor: end; }
.line { fill: none; stroke-width: 2.600; stroke-linejoin: round; }
.lead { fill: none; stroke: #8286a0; stroke-width: 1.200; }
.place { font: 400 27px Roboto, sans-serif; fill: #868686; }
.bing { font: 400 23px "Open Sans", sans-serif; fill: #fff; }
.bold { font-size: 22px; font-weight: 600; }
.terms { text-decoration: underline; }

/* side panes */
.pane { display: flex; flex-direction: column; align-items: center; padding-top: 19px; border-left: 1px solid #e1dfdd; }
.pane span { writing-mode: vertical-rl; font-weight: 600; font-size: 20.800px; line-height: 24px; white-space: nowrap; margin-right: 3px; }
.dbl, .fun { fill: none; stroke: #252423; stroke-width: 1.600; }
.filters { width: 49px; background: #fff; border-left-color: #a8a6a4; }
.fun { margin: 23px 0 13px 4px; }
.vis { width: 52px; }
.data { width: 52px; }
.pane.vis span, .pane.data span { margin-top: 22px; font-size: 21.700px; margin-right: 4px; }

/* page tabs */
.tabs { height: 53px; display: flex; background: #f3f2f1; }
.views { width: 192px; border-right: 1px solid #a19f9d; }
.tab { background: #fff; width: 149px; text-align: center; font-size: 17px; line-height: 55px; letter-spacing: -.3px; border-right: 1px solid #c8c6c4; }
.tab.on { font-weight: 600; border-bottom: 6px solid #117865; letter-spacing: -.25px; }
.tab.second { width: 163px; font-size: 17.300px; }
.add { width: 59px; background: #117865; display: flex; align-items: center; justify-content: center; }

/* status */
.status { height: 35px; flex: none; border-top: 1px solid #dcdad8; background: #f3f2f1; display: flex; align-items: center; font-size: 17.600px; color: #484644; letter-spacing: -.1px; }
.pageno { width: 1600px; padding-left: 6px; padding-top: 1px; }
.pct { width: 79px; padding-left: 16px; letter-spacing: -.6px; }

/* taskbar */
.taskbar { height: 73px; flex: none; border-top: 1px solid #000; box-shadow: inset 0 2px #4b4b4b; background: linear-gradient(90deg, #202020 0 25%, #22202a 40% 70%, #202020 85%); display: flex; align-items: center; color: #fff; font-size: 17.100px; letter-spacing: -.4px; line-height: 24px; }
.weather { width: 545px; padding-left: 28px; display: flex; gap: 6px; align-items: center; }
.weather svg { margin-top: -16px; }
.dim { color: #ccc; }
.search { margin-left: 20px; width: 330px; height: 48px; border-radius: 24px; border: 1px solid #57565c; background: #414045; display: flex; align-items: center; padding: 0 10px 0 17px; font-size: 18px; color: #ddd; }
.search span { margin-left: 14px; flex: 1; }
.apps { margin-left: 14px; }
.tray1 { margin-left: 115px; }
.lang { width: 42px; margin-left: 21px; text-align: center; }
.tray2 { margin-left: 23px; }
.clock { width: 105px; text-align: right; white-space: nowrap; }
.tray3 { margin-left: 11px; }
.badge { font-size: 16px; fill: #111; }
.light { font-size: 14px; fill: #fff; }
.pre { font: bold 9px Lato, sans-serif; fill: #222; }
```
